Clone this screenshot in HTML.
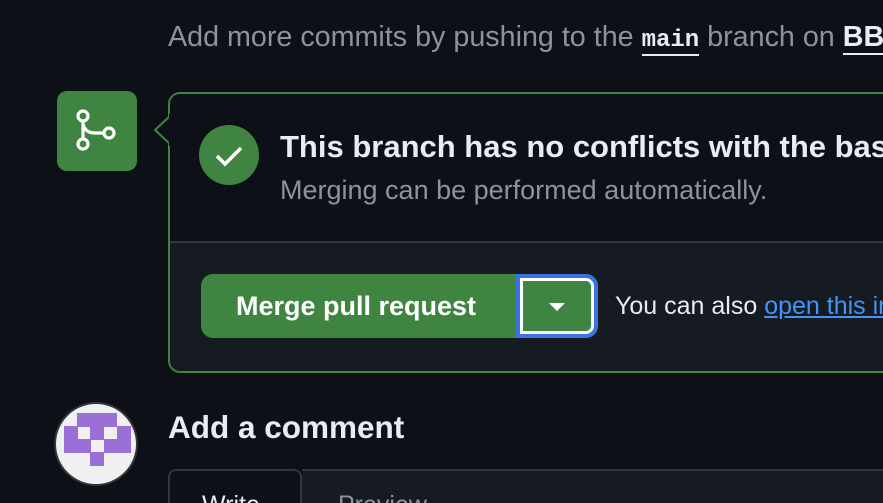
<!DOCTYPE html>
<html style="overflow:hidden;width:883px;height:503px"><head><style>
body{margin:0;width:883px;height:503px;background:#0d1117;overflow:hidden;position:relative;font-family:"Liberation Sans",sans-serif;color:#e6edf3}
.a{position:absolute}
</style></head><body>
<div class="a" style="left:168px;top:21px;width:715px;padding-bottom:8px;overflow:hidden;font-size:28.7px;color:#8b949e;white-space:nowrap">Add more commits by pushing to the <span style="font-family:'Liberation Mono',monospace;font-weight:bold;color:#e6edf3;border-bottom:2px solid #e6edf3;font-size:24px">main</span> branch on <span style="font-weight:bold;color:#e6edf3;border-bottom:2px solid #e6edf3">BBB</span></div>

<div class="a" style="left:57px;top:91px;width:80px;height:80px;background:#3f8440;border-radius:10px">
<svg width="80" height="80" viewBox="0 0 80 80"><g fill="none" stroke="#fff" stroke-width="3.2"><circle cx="26" cy="25" r="5"/><circle cx="26" cy="53" r="5"/><circle cx="52" cy="42" r="5"/><path d="M26 30V48M26 33Q28 42 38 42H47"/></g></svg>
</div>

<div class="a" style="left:168px;top:92px;width:760px;height:277px;border:2px solid #3f8440;border-radius:12px;overflow:hidden;background:#161b22">
<div style="height:147px;background:#0d1117;border-bottom:2px solid #30363d"></div>
</div>
<svg class="a" style="left:152px;top:114px" width="20" height="32"><path d="M18 2L3 16L18 30" fill="#0d1117" stroke="#3f8440" stroke-width="2"/><rect x="17" y="0" width="3" height="32" fill="#0d1117"/></svg>

<div class="a" style="left:199px;top:125px;width:60px;height:60px;border-radius:50%;background:#3f8440">
<svg width="60" height="60"><path d="M18 31L26 39L42 23" fill="none" stroke="#fff" stroke-width="3.5"/></svg></div>
<div class="a" style="left:280px;top:129px;width:603px;overflow:hidden;font-size:31px;font-weight:bold;white-space:nowrap">This branch has no conflicts with the base branch</div>
<div class="a" style="left:280px;top:175px;font-size:27px;color:#8b949e;white-space:nowrap">Merging can be performed automatically.</div>

<div class="a" style="left:201px;top:274px;width:330px;height:64px;background:#3f8440;border-radius:12px 0 0 12px;color:#fff;font-size:27px;font-weight:bold;line-height:64px;text-indent:35px;white-space:nowrap">Merge pull request</div>
<div class="a" style="left:516px;top:274px;width:74px;height:56px;background:#3f8440;border:4px solid #3b74e0;border-radius:0 12px 12px 0;box-shadow:inset 0 0 0 3px #fff"></div>
<svg class="a" style="left:548px;top:302px" width="18" height="10"><path d="M1 1H17L9 9Z" fill="#fff"/></svg>
<div class="a" style="left:615px;top:292px;width:268px;padding-bottom:6px;overflow:hidden;font-size:25px;white-space:nowrap">You can also <span style="color:#4493f8;text-decoration:underline">open this in GitHub Desktop</span></div>

<div class="a" style="left:54px;top:402px;width:80px;height:80px;border-radius:50%;background:#f0f0f0;border:2px solid #30363d;overflow:hidden">
<svg class="a" style="left:6px;top:7px" width="70" height="60">
<g fill="#9a6fd6">
<rect x="15" y="2" width="40" height="14"/>
<rect x="2" y="15" width="14" height="14"/><rect x="28" y="15" width="14" height="14"/><rect x="55" y="15" width="14" height="14"/>
<rect x="2" y="28" width="27" height="14"/><rect x="42" y="28" width="27" height="14"/>
<rect x="28" y="41" width="14" height="14"/>
</g></svg>
</div>
<div class="a" style="left:168px;top:409px;font-size:31.5px;font-weight:bold;white-space:nowrap">Add a comment</div>

<div class="a" style="left:302px;top:469px;width:581px;height:34px;background:#161b22;border-top:2px solid #30363d;overflow:hidden"><div style="position:absolute;left:36px;top:20px;font-size:25px;color:#8b949e">Preview</div></div>
<div class="a" style="left:168px;top:469px;width:134px;height:34px;background:#0d1117;border:2px solid #30363d;border-bottom:none;border-radius:8px 8px 0 0;box-sizing:border-box;overflow:hidden"><div style="position:absolute;left:32px;top:20px;font-size:25px">Write</div></div>
</body></html>
